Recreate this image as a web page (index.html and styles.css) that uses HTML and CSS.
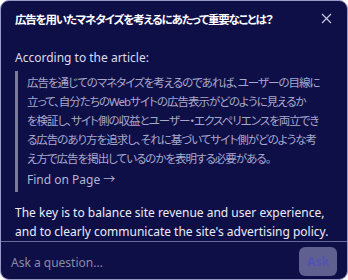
FILE: index.html
```html
<!DOCTYPE html>
<html lang="ja">
<head>
<meta charset="utf-8">
<link rel="stylesheet" href="styles.css">
</head>
<body>
<div class="panel">
  <div class="header">
    <div class="title">広告を用いたマネタイズを考えるにあたって重要なことは？</div>
    <svg class="close" width="11" height="11" viewBox="0 0 11 11"><path d="M1 1L10 10M10 1L1 10" stroke="#c8c8e0" stroke-width="1.2" fill="none"/></svg>
  </div>
  <div class="body">
    <div class="lead">According to the article:</div>
    <div class="quote">
      <p class="qtext">広告を通じてのマネタイズを考えるのであれば、ユーザーの目線に<br>立って、自分たちのWebサイトの広告表示がどのように見えるか<br>を検証し、サイト側の収益とユーザー・エクスペリエンスを両立でき<br>る広告のあり方を追求し、それに基づいてサイト側がどのような考<br>え方で広告を掲出しているのかを表明する必要がある。</p>
      <div class="find">Find on Page <span class="arrow">→</span></div>
    </div>
    <p class="answer">The key is to balance site revenue and user experience, and to clearly communicate the site's advertising policy.</p>
  </div>
  <div class="footer">
    <div class="placeholder">Ask a question...</div>
    <div class="ask">Ask</div>
  </div>
</div>
</body>
</html>
```
FILE: styles.css
```css
html, body { margin: 0; padding: 0; background: #ffffff; }
body { width: 348px; height: 280px; font-family: "Noto Sans", "Noto Sans CJK JP", sans-serif; }
.panel {
  box-sizing: border-box;
  width: 348px; height: 280px;
  background: #0f0f48;
  border: 1px solid #9a9ac8;
  border-radius: 9px;
  display: flex; flex-direction: column;
  color: #e6e6f2;
  overflow: hidden;
}
.header {
  display: flex; align-items: center; justify-content: space-between;
  height: 35px; padding: 0 15px 0 14px; flex: none;
}
.title { font-size: 11.5px; font-weight: 700; color: #ffffff; font-feature-settings: "palt"; letter-spacing: -1.2px; white-space: nowrap; }
.body { padding: 13px 14px 0 14px; flex: 1; }
.lead { font-size: 12px; line-height: 18px; color: #dcdcec; }
.quote {
  margin-top: 4px;
  border-left: 3px solid #7a7a9a;
  padding: 2px 0 3px 9px;
}
.qtext {
  margin: 0; font-size: 11.5px; line-height: 19px; color: #a8a8cc;
  font-feature-settings: "palt"; letter-spacing: -1px; white-space: nowrap;
}
.find { margin-top: 3px; font-size: 12px; line-height: 18px; color: #b4b4d0; }
.answer { margin: 11px 0 0 0; font-size: 12px; line-height: 19px; color: #ececf6; }
.footer {
  border-top: 1px solid #6a6a9a;
  flex: none; height: 39px; box-sizing: border-box;
  display: flex; align-items: center; justify-content: space-between;
  padding: 0 10px 0 10px;
}
.placeholder { font-size: 12px; color: #8a8aa6; margin-top: 3px; }
.ask {
  width: 38px; height: 29px; border-radius: 6px;
  background: #5f5f90; color: #5252b4;
  font-size: 12px; font-weight: 700;
  display: flex; align-items: center; justify-content: center;
}
```
